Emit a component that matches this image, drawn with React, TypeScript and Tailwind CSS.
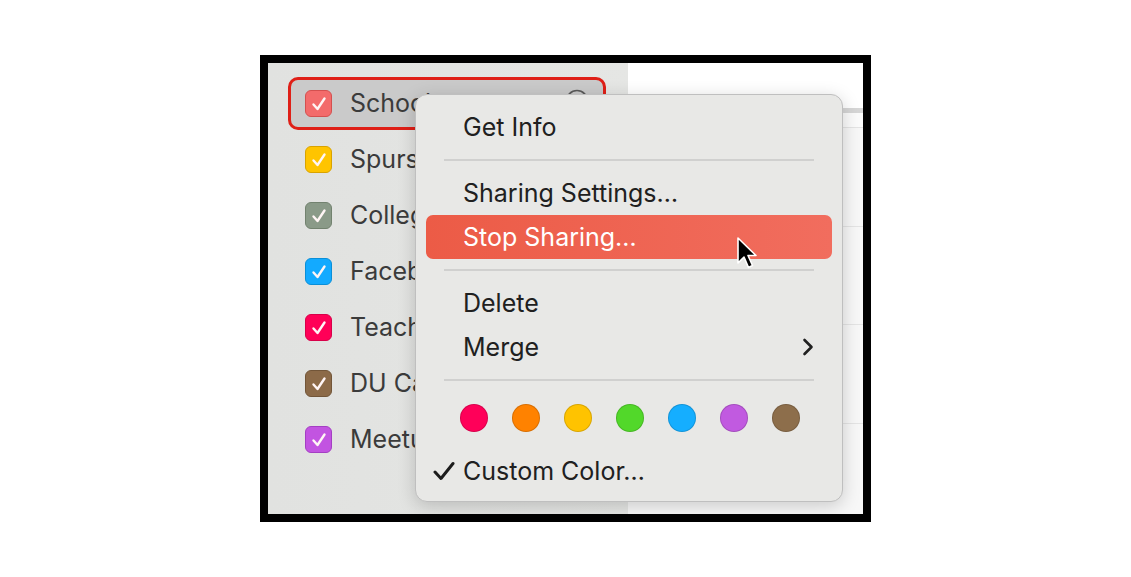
import React from "react";

const font = { fontFamily: "Inter, 'Noto Sans', sans-serif" };

type Cal = { name: string; fill: string; border: string; selected?: boolean };

const cals: Cal[] = [
  { name: "School", fill: "#f36b6b", border: "#d4504f", selected: true },
  { name: "Spurs", fill: "#ffc400", border: "#d9a300" },
  { name: "College", fill: "#8a9a88", border: "#72826f" },
  { name: "Facebook", fill: "#13aaff", border: "#0a8fd8" },
  { name: "Teaching", fill: "#ff0057", border: "#d80049" },
  { name: "DU Calendar", fill: "#8c6a48", border: "#725538" },
  { name: "Meetup", fill: "#c254e1", border: "#a43fc3" },
];

const swatches = ["#ff0059", "#ff8200", "#ffc300", "#52d82a", "#15aeff", "#c15ae0", "#8d6e4b"];

function Check({ fill, border }: { fill: string; border: string }) {
  return (
    <div
      className="w-[27px] h-[27px] rounded-[6px] flex items-center justify-center shrink-0"
      style={{ backgroundColor: fill, border: `1.5px solid ${border}` }}
    >
      <svg width="18" height="18" viewBox="0 0 18 18">
        <path d="M3.5 9.5 L7.5 14 L14.5 3.5" fill="none" stroke="#fff5f5" strokeWidth="2.4" strokeLinecap="round" strokeLinejoin="round" />
      </svg>
    </div>
  );
}

function Sep() {
  return (
    <div className="h-[22px] flex items-center px-[28px]">
      <div className="h-[2px] w-full bg-[#d0d0cf]" />
    </div>
  );
}

function Item({ label, highlight, chevron, check }: { label: string; highlight?: boolean; chevron?: boolean; check?: boolean }) {
  return (
    <div
      className={`h-[44px] mx-[10px] rounded-[7px] flex items-center relative pl-[37px] pr-[20px] text-[25px] ${
        highlight ? "bg-gradient-to-r from-[#ec5b46] to-[#f16d5e] text-white" : "text-[#202020]"
      }`}
    >
      {check && (
        <svg className="absolute left-[7px] top-[12px]" width="22" height="20" viewBox="0 0 22 20">
          <path d="M2 11 L8 17.5 L20 2.5" fill="none" stroke="#1c1c1c" strokeWidth="3" strokeLinecap="round" strokeLinejoin="round" />
        </svg>
      )}
      <span className="flex-1 leading-none">{label}</span>
      {chevron && (
        <svg width="12" height="20" viewBox="0 0 12 20" className="mr-[-2px]">
          <path d="M2.5 3 L9.5 10 L2.5 17" fill="none" stroke="#202020" strokeWidth="2.6" strokeLinecap="round" strokeLinejoin="round" />
        </svg>
      )}
    </div>
  );
}

export default function App() {
  return (
    <div className="w-[1131px] h-[577px] bg-white relative" style={font}>
      <div className="absolute left-[260px] top-[55px] w-[611px] h-[467px] bg-black p-[8px]">
        <div className="w-full h-full flex relative overflow-hidden">
          {/* Sidebar */}
          <div className="w-[360px] h-full bg-gradient-to-r from-[#e1e2e0] to-[#e5e6e4] pt-[14px] pl-[20px] flex flex-col gap-[3px]">
            {cals.map((c) => (
              <div
                key={c.name}
                className={`w-[318px] h-[53px] rounded-[10px] flex items-center pl-[14px] pr-[14px] ${
                  c.selected ? "border-[3px] border-[#df1f17] bg-[#cacaca]" : "border-[3px] border-transparent"
                }`}
              >
                <Check fill={c.fill} border={c.border} />
                <span className="ml-[18px] text-[25px] text-[#3b3b3b] flex-1 whitespace-nowrap leading-none">{c.name}</span>
                {c.selected && (
                  <svg width="24" height="24" viewBox="0 0 24 24" className="mt-[-6px]">
                    <circle cx="12" cy="12" r="10.5" fill="none" stroke="#5a5a5a" strokeWidth="1.6" />
                  </svg>
                )}
              </div>
            ))}
          </div>
          {/* Right pane */}
          <div className="flex-1 h-full bg-[#fbfbfb] flex flex-col">
            <div className="h-[45px] bg-white" />
            <div className="h-[5px] bg-[#d6d6d6]" />
            <div className="h-[15px] border-b border-[#e4e4e4]" />
            <div className="h-[99px] border-b border-[#e4e4e4] bg-[#f7f7f7]" />
            <div className="h-[98px] border-b border-[#e4e4e4] bg-[#f7f7f7]" />
            <div className="h-[99px] border-b border-[#e4e4e4] bg-[#f7f7f7]" />
            <div className="flex-1 bg-[#f7f7f7]" />
          </div>

          {/* Context menu */}
          <div className="absolute left-[147px] top-[31px] w-[428px] h-[408px] rounded-[12px] bg-[#e8e8e6] border border-[#bfbfbf] shadow-[0_4px_18px_rgba(0,0,0,0.18)] pt-[10px]">
            <Item label="Get Info" />
            <Sep />
            <Item label="Sharing Settings…" />
            <Item label="Stop Sharing…" highlight />
            <Sep />
            <Item label="Delete" />
            <Item label="Merge" chevron />
            <Sep />
            <div className="h-[54px] flex items-center pl-[44px] gap-[24px]">
              {swatches.map((s) => (
                <div key={s} className="w-[28px] h-[28px] rounded-full border border-[#00000026]" style={{ backgroundColor: s }} />
              ))}
            </div>
            <div className="mt-[4px]">
              <Item label="Custom Color…" check />
            </div>
          </div>

          {/* Cursor */}
          <svg className="absolute left-[468px] top-[173px]" width="22" height="36" viewBox="0 0 22 36">
            <path d="M2 2 L2 27 L8 21 L12.5 31.5 L16.5 29.5 L12 19.5 L20 19.5 Z" fill="black" stroke="white" strokeWidth="1.6" strokeLinejoin="round" />
          </svg>
        </div>
      </div>
    </div>
  );
}
